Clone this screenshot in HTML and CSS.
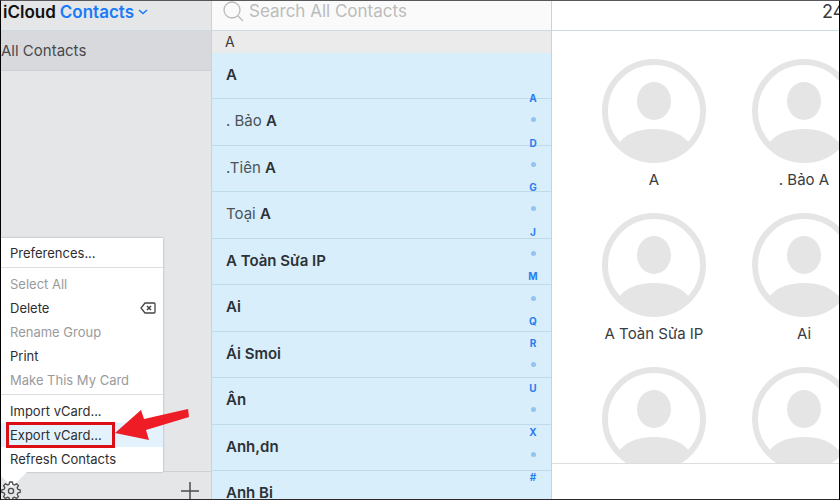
FILE: index.html
```
<!DOCTYPE html>
<html lang="en">
<head>
  <meta charset="UTF-8">
  <title>iCloud Contacts</title>
  <link rel="stylesheet" href="styles.css">
</head>
<body>
  <!-- shared avatar drawing -->
  <svg class="defs" width="0" height="0" aria-hidden="true">
    <symbol id="avatar" viewBox="0 0 104 104">
      <clipPath id="avatar-clip"><circle cx="52" cy="52" r="51"/></clipPath>
      <circle cx="52" cy="52" r="49" fill="none" stroke="#e5e5e5" stroke-width="6"/>
      <ellipse cx="52" cy="42" rx="17" ry="19" fill="#e5e5e5"/>
      <path clip-path="url(#avatar-clip)" fill="#e5e5e5" d="M15 87C22 75 36 70 52 70s30 5 37 17v20H15z"/>
    </symbol>
  </svg>

  <div class="app">
    <aside class="sidebar">
      <header class="bar brand">
        <span>iCloud</span>
        <button type="button" class="app-switch">Contacts
          <svg width="10" height="6" viewBox="0 0 10 6"><path d="M1 1l4 3.5L9 1" fill="none" stroke="#1a7bf8" stroke-width="1.5"/></svg>
        </button>
      </header>
      <a href="#" class="group">All Contacts</a>

      <footer class="toolbar">
        <button type="button" class="icon-button gear" aria-label="Settings">
          <svg width="20" height="20" viewBox="0 0 20 20" fill="none" stroke="#4c4c4e" stroke-width="1.3" stroke-linejoin="round">
            <path d="M8.6 1h2.8l.5 2.3 1.6.7 2-1.3 2 2-1.3 2 .7 1.6 2.3.5v2.6l-2.3.5-.7 1.6 1.3 2-2 2-2-1.3-1.6.7-.5 2.3H8.6l-.5-2.3-1.6-.7-2 1.3-2-2 1.3-2-.7-1.6L.8 11.4V8.8l2.3-.5.7-1.6-1.3-2 2-2 2 1.3 1.6-.7z"/>
            <circle cx="10" cy="10" r="2.6"/>
          </svg>
        </button>
        <button type="button" class="icon-button" aria-label="Add">
          <svg width="20" height="20" viewBox="0 0 20 20"><path d="M10 1v18M1 10h18" stroke="#4c4c4e" stroke-width="1.5"/></svg>
        </button>
      </footer>

      <div class="menu">
        <button type="button">Preferences...</button>
        <hr>
        <button type="button" disabled>Select All</button>
        <button type="button">Delete
          <svg width="16" height="12" viewBox="0 0 16 12" fill="none" stroke="#444"><path d="M5 1h9q1 0 1 1v8q0 1-1 1H5L1 6z" stroke-width="1.3"/><path d="M7 4l4 4M11 4L7 8" stroke-width="1.5"/></svg>
        </button>
        <button type="button" disabled>Rename Group</button>
        <button type="button">Print</button>
        <button type="button" disabled>Make This My Card</button>
        <hr>
        <button type="button">Import vCard...</button>
        <button type="button" class="active">Export vCard...</button>
        <button type="button">Refresh Contacts</button>
      </div>
      <svg class="arrow" width="76" height="36" viewBox="0 0 76 36"><path d="M1 25L27 2l3 9L74 1l1 8-43 13 3 10z" fill="#ee1c25"/></svg>
    </aside>

    <section class="list">
      <div class="bar search">
        <svg width="22" height="22" viewBox="0 0 22 22" fill="none" stroke="#b9b9b9" stroke-width="1.3"><circle cx="9" cy="9" r="8"/><path d="M15 15l5 5"/></svg>
        <input type="search" placeholder="Search All Contacts" aria-label="Search All Contacts">
      </div>
      <h2 class="letter">A</h2>
      <ul class="contacts">
        <li><b>A</b></li>
        <li>. Bảo <b>A</b></li>
        <li>.Tiên <b>A</b></li>
        <li>Toại <b>A</b></li>
        <li><b>A Toàn Sửa IP</b></li>
        <li><b>Ai</b></li>
        <li><b>Ái Smoi</b></li>
        <li><b>Ân</b></li>
        <li><b>Anh,dn</b></li>
        <li><b>Anh Bi</b></li>
      </ul>
      <nav class="index">
        <a href="#">A</a><i></i>
        <a href="#">D</a><i></i>
        <a href="#">G</a><i></i>
        <a href="#">J</a><i></i>
        <a href="#">M</a><i></i>
        <a href="#">Q</a>
        <a href="#">R</a><i></i>
        <a href="#">U</a><i></i>
        <a href="#">X</a><i></i>
        <a href="#">#</a>
      </nav>
    </section>

    <main class="detail">
      <div class="bar count">24</div>
      <div class="cards">
        <figure><svg><use href="#avatar"/></svg><figcaption>A</figcaption></figure>
        <figure><svg><use href="#avatar"/></svg><figcaption>. Bảo A</figcaption></figure>
        <figure><svg><use href="#avatar"/></svg><figcaption>A Toàn Sửa IP</figcaption></figure>
        <figure><svg><use href="#avatar"/></svg><figcaption>Ai</figcaption></figure>
        <figure><svg><use href="#avatar"/></svg></figure>
        <figure><svg><use href="#avatar"/></svg></figure>
      </div>
      <footer class="detail-footer"></footer>
    </main>
  </div>
</body>
</html>
```

FILE: styles.css
```
* {
  box-sizing: border-box;
}

body {
  margin: 0;
  font-family: Inter, "Liberation Sans", sans-serif;
  font-size: 15px;
  color: #3a3c3e;
}

button,
input {
  font: inherit;
  color: inherit;
  border: none;
  background: none;
  padding: 0;
}

.defs {
  position: absolute;
}

.app {
  display: grid;
  grid-template-columns: 210px 341px minmax(0, 1fr);
  height: 100vh;
  border: 1px solid #000;
  border-top-color: #58575a;
  border-bottom-color: #2a282b;
  overflow: hidden;
}

.bar {
  display: flex;
  align-items: center;
  flex: none;
  height: 30px;
  padding-bottom: 8px;
  border-bottom: 1px solid #c9dbe3;
}

/* sidebar */

.sidebar {
  position: relative;
  display: flex;
  flex-direction: column;
  min-height: 0;
  background: #e5e6e8;
}

.brand {
  gap: 4px;
  padding-left: 2px;
  font-size: 17px;
  font-weight: 600;
  color: #111;
}

.app-switch {
  display: flex;
  align-items: center;
  gap: 4px;
  color: #1a7bf8;
}

.group {
  height: 40px;
  line-height: 40px;
  color: #48494c;
  background: #d8d9dd;
  border-bottom: 1px solid #cdd0d4;
  text-decoration: none;
}

.toolbar {
  display: flex;
  justify-content: space-between;
  align-items: flex-start;
  flex: 0 0 28px;
  margin-top: auto;
  padding: 9px 11px 0 0;
  border-top: 1px solid #cfd0d2;
  overflow: hidden;
}

.icon-button {
  height: 20px;
}

.icon-button svg {
  display: block;
}

.gear {
  position: relative;
  z-index: 2;
}

/* popup menu over the toolbar */

.menu {
  position: absolute;
  left: 0;
  bottom: 27px;
  width: 162px;
  padding: 3px 0 1px;
  font-size: 13px;
  color: #2e2e30;
  background: #fff;
  box-shadow: 0 0 2px rgba(0, 0, 0, 0.3);
}

.menu::after {
  content: "";
  position: absolute;
  top: 100%;
  left: -4px;
  border: 15px solid transparent;
  border-top-color: #fff;
  border-bottom: none;
}

.menu button {
  display: flex;
  justify-content: space-between;
  align-items: center;
  width: 100%;
  height: 24px;
  padding: 0 7px 0 9px;
}

.menu button:disabled {
  color: #9a9a9c;
}

.menu hr {
  height: 1px;
  margin: 2px 0 4px;
  border: none;
  background: #dedede;
}

.menu .active {
  position: relative;
  background: #e4f2fd;
}

.menu .active::after {
  content: "";
  position: absolute;
  inset: -1px 48px -1px 5px;
  border: 3px solid #dc0f17;
}

.arrow {
  position: absolute;
  left: 113px;
  bottom: 55px;
}

/* contact list */

.list {
  position: relative;
  display: flex;
  flex-direction: column;
  min-height: 0;
  border-left: 1px solid #cbd3d9;
  border-right: 1px solid #cbd3d9;
}

.search {
  gap: 4px;
  padding-left: 11px;
  background: #fafafa;
}

.search input {
  flex: 1;
  min-width: 0;
  height: 20px;
  margin-bottom: 2px;
  font-size: 17px;
  outline: none;
}

.search input::placeholder {
  color: #bcbcbc;
}

.letter {
  flex: 0 0 22px;
  margin: 0;
  padding-left: 13px;
  font-size: 14px;
  font-weight: 400;
  line-height: 22px;
  background: #ebebeb;
}

.contacts {
  flex: 1;
  min-height: 0;
  margin: 0;
  padding: 0;
  list-style: none;
  background: #d8eefb;
  overflow: hidden;
}

.contacts li {
  height: 46px;
  padding-left: 14px;
  line-height: 44px;
  color: #4b5459;
  border-bottom: 1px solid #bfdbe9;
}

.contacts li:nth-child(even) {
  height: 47px;
}

.contacts b {
  font-weight: 600;
  color: #2c3236;
}

.index {
  position: absolute;
  top: 91px;
  right: 11px;
  bottom: 16px;
  display: flex;
  flex-direction: column;
  justify-content: space-between;
  align-items: center;
  width: 14px;
}

.index a {
  height: 12px;
  font-size: 10px;
  font-weight: 700;
  line-height: 12px;
  color: #2a7df0;
  text-decoration: none;
}

.index i {
  width: 5px;
  height: 5px;
  margin: 3px 0 4px;
  border-radius: 50%;
  background: #93c3f0;
}

/* selected cards */

.detail {
  display: flex;
  flex-direction: column;
  min-width: 0;
  min-height: 0;
  background: #fff;
}

.count {
  padding-left: 270px;
  font-size: 18px;
}

.cards {
  flex: 1;
  min-height: 0;
  display: grid;
  grid-template-columns: repeat(2, 150px);
  grid-auto-rows: 154px;
  align-content: start;
  padding: 28px 27px 0;
  overflow: hidden;
}

.cards figure {
  display: flex;
  flex-direction: column;
  align-items: center;
  margin: 0;
}

.cards svg {
  flex: none;
  width: 104px;
  height: 104px;
}

.cards figcaption {
  line-height: 34px;
}

.detail-footer {
  flex: 0 0 36px;
  border-top: 1px solid #dedede;
}
```
